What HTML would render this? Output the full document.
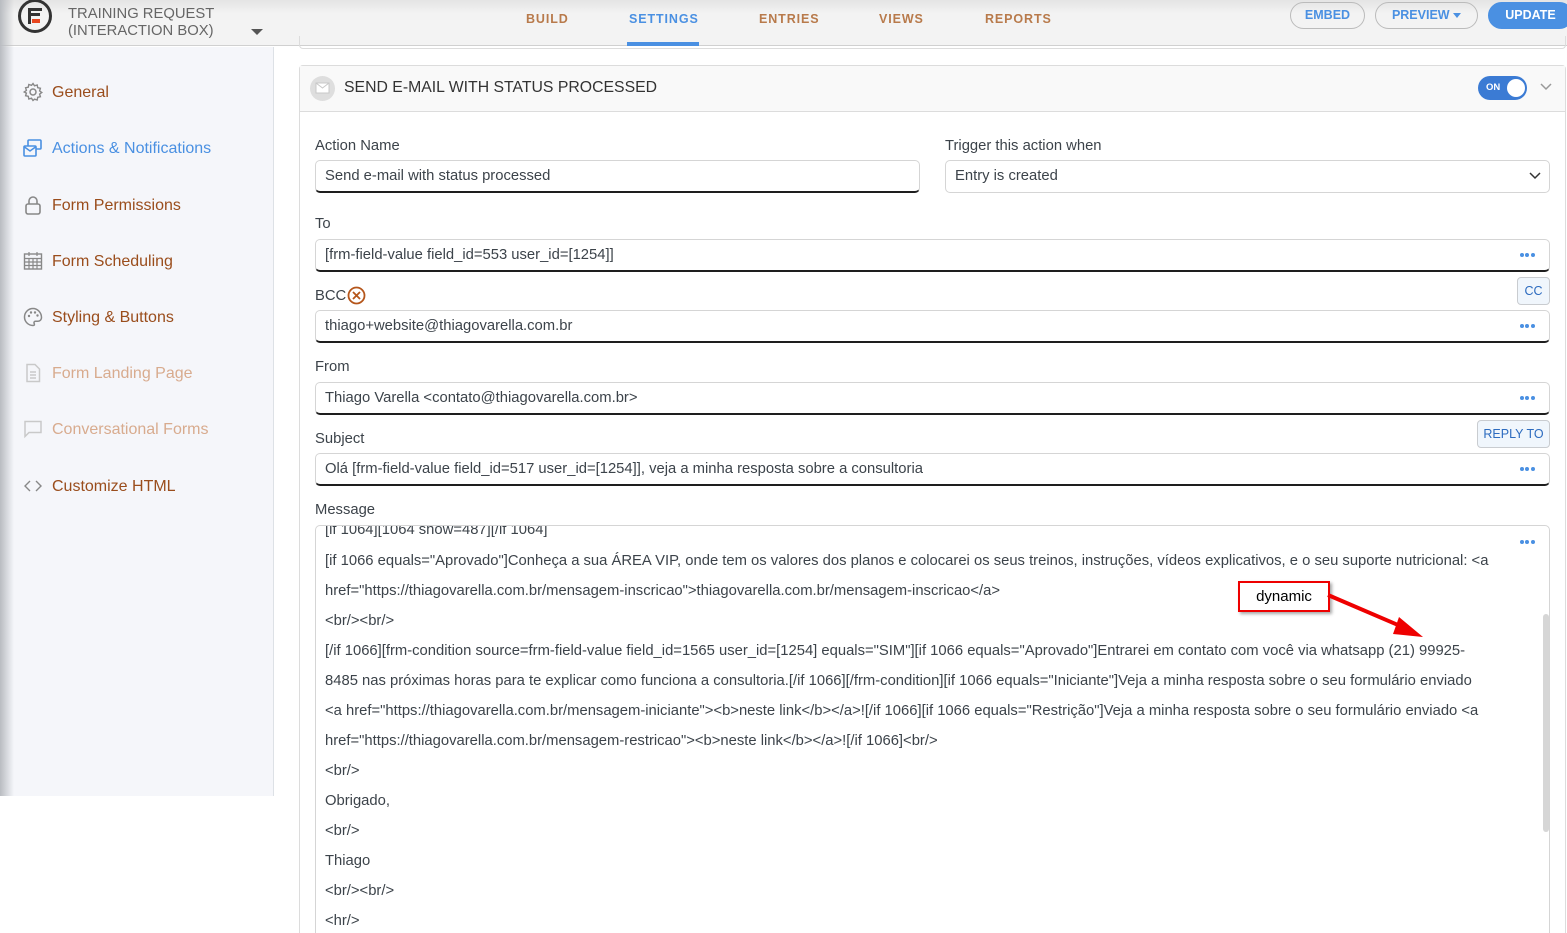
<!DOCTYPE html>
<html><head><meta charset="utf-8"><style>
*{box-sizing:border-box;margin:0;padding:0}
html,body{width:1567px;height:933px;overflow:hidden}
body{background:#fff;font-family:"Liberation Sans",Roboto,sans-serif;color:#3c434a;position:relative}
.hdr{position:absolute;left:0;top:0;width:1567px;height:46px;background:linear-gradient(#e4e4e4,#f3f3f3 30%,#f3f3f3);border-bottom:1px solid #d0d0d0}
.tab{position:absolute;top:12px;font-size:12.5px;font-weight:bold;letter-spacing:0.9px;color:#b87a4b}
.btn{position:absolute;top:2px;height:27px;border-radius:14px;border:1px solid #bbb;color:#4a90e2;font-size:12.5px;font-weight:bold;text-align:center;line-height:25px}
.side{position:absolute;left:0;top:47px;width:274px;height:749px;background:#f5f6fa;border-right:1px solid #dde1e6}
.shadow{position:absolute;left:0;top:0;width:14px;height:796px;background:linear-gradient(90deg,#b9bcc1,rgba(245,246,250,0))}
.nav{position:absolute;left:52px;font-size:16px;color:#9a4d1c}
.ico{position:absolute;left:23px;width:20px;height:20px}
.lab{position:absolute;left:315px;font-size:14.8px;color:#3c434a}
.inp{position:absolute;height:33px;border:1px solid #d5d5d5;border-bottom:2px solid #1e1e1e;border-radius:5px;font-size:14.8px;line-height:30px;padding-left:9px;color:#3c434a;background:#fff}
.dots{position:absolute;right:13px;top:13px;width:16px;height:4px}
.dots i{display:inline-block;width:4px;height:4px;border-radius:2px;background:#4a90e2;margin-right:1.3px;vertical-align:top}
.small{position:absolute;height:28px;border:1px solid #c9ccd0;border-radius:4px;background:#f0f6fc;color:#2c6bbf;font-size:12.5px;line-height:26px;text-align:center}
.msg{position:absolute;left:315px;top:525px;width:1235px;height:420px;border:1px solid #d5d5d5;border-radius:5px;overflow:hidden}
.msg p{position:absolute;left:9px;font-size:14.8px;color:#3c434a;white-space:nowrap}
</style></head><body>
<div class="hdr">
 <svg style="position:absolute;left:17px;top:0" width="37" height="36" viewBox="0 0 37 36"><circle cx="18" cy="16" r="15.5" fill="none" stroke="#333" stroke-width="3"/><rect x="11" y="8" width="14" height="3" fill="#333"/><rect x="11" y="13" width="12" height="3" fill="#333"/><rect x="11" y="8" width="3" height="16" fill="#333"/><rect x="15" y="19" width="8" height="4" fill="#e8461f"/></svg>
 <div style="position:absolute;left:68px;top:6px;font-size:14.8px;line-height:17px;color:#666">TRAINING REQUEST<br>(INTERACTION BOX)</div>
 <div style="position:absolute;left:251px;top:29px;border-left:6px solid transparent;border-right:6px solid transparent;border-top:6px solid #555"></div>
 <div class="tab" style="left:526px">BUILD</div>
 <div class="tab" style="left:629px;color:#4a90e2">SETTINGS</div>
 <div style="position:absolute;left:627px;top:42px;width:72px;height:4px;background:#4a90e2"></div>
 <div class="tab" style="left:759px">ENTRIES</div>
 <div class="tab" style="left:879px">VIEWS</div>
 <div class="tab" style="left:985px">REPORTS</div>
 <div class="btn" style="left:1290px;width:75px">EMBED</div>
 <div class="btn" style="left:1375px;width:103px">PREVIEW <span style="display:inline-block;border-left:4px solid transparent;border-right:4px solid transparent;border-top:5px solid #4a90e2;vertical-align:middle"></span></div>
 <div class="btn" style="left:1488px;width:85px;background:#4a90e2;border-color:#4a90e2;color:#fff">UPDATE</div>
</div>
<div class="side"></div>
<div class="shadow"></div>
<svg class="ico" style="top:82px" viewBox="0 0 20 20"><circle cx="10" cy="10" r="3" fill="none" stroke="#888" stroke-width="1.5"/><path d="M10 1.5l1.5 2.3 2.7-.8.5 2.7 2.7.6-.8 2.6 2.2 1.6-2.2 1.6.8 2.6-2.7.6-.5 2.7-2.7-.8L10 18.5l-1.5-2.3-2.7.8-.5-2.7-2.7-.6.8-2.6L1.2 10l2.2-1.6-.8-2.6 2.7-.6.5-2.7 2.7.8z" fill="none" stroke="#888" stroke-width="1.4"/></svg>
<div class="nav" style="top:84px">General</div>
<svg class="ico" style="top:138px" viewBox="0 0 20 20"><rect x="5" y="2" width="13" height="9" rx="1" fill="none" stroke="#4a90e2" stroke-width="1.6"/><rect x="1" y="8" width="12" height="10" rx="1" fill="#f5f6fa" stroke="#4a90e2" stroke-width="1.6"/><path d="M1.5 9l5.5 4 5.5-4" fill="none" stroke="#4a90e2" stroke-width="1.5"/></svg>
<div class="nav" style="top:140px;color:#4a90e2">Actions &amp; Notifications</div>
<svg class="ico" style="top:195px" viewBox="0 0 20 20"><rect x="3" y="9" width="14" height="10" rx="2" fill="none" stroke="#888" stroke-width="1.6"/><path d="M6 9V6a4 4 0 0 1 8 0v3" fill="none" stroke="#888" stroke-width="1.6"/></svg>
<div class="nav" style="top:197px">Form Permissions</div>
<svg class="ico" style="top:251px" viewBox="0 0 20 20"><rect x="1.5" y="3" width="17" height="15" fill="none" stroke="#888" stroke-width="1.4"/><path d="M1.5 7.5h17M1.5 11h17M1.5 14.5h17M6 7.5v10.5M10 7.5v10.5M14 7.5v10.5M6 1v4M14 1v4" stroke="#888" stroke-width="1.2"/></svg>
<div class="nav" style="top:253px">Form Scheduling</div>
<svg class="ico" style="top:307px" viewBox="0 0 20 20"><path d="M10 1.5a8.5 8.5 0 0 0 0 17c1.5 0 1.8-1 1.2-2-.6-1 0-2.3 1.3-2.3h2.5a3.5 3.5 0 0 0 3.5-3.7C18.4 5.5 14.6 1.5 10 1.5z" fill="none" stroke="#888" stroke-width="1.5"/><circle cx="6" cy="9" r="1.2" fill="#888"/><circle cx="8" cy="5.5" r="1.2" fill="#888"/><circle cx="12" cy="5.5" r="1.2" fill="#888"/><circle cx="14.5" cy="8.5" r="1.2" fill="#888"/></svg>
<div class="nav" style="top:309px">Styling &amp; Buttons</div>
<svg class="ico" style="top:363px" viewBox="0 0 20 20"><path d="M4 1.5h8l4.5 4.5v12.5H4z" fill="none" stroke="#c9c9c9" stroke-width="1.5"/><path d="M7 9h6M7 12h6M7 15h6" stroke="#c9c9c9" stroke-width="1.4"/></svg>
<div class="nav" style="top:365px;color:#d8ab8e">Form Landing Page</div>
<svg class="ico" style="top:419px" viewBox="0 0 20 20"><path d="M2 2.5h16v11H6l-4 4z" fill="none" stroke="#c9c9c9" stroke-width="1.5"/></svg>
<div class="nav" style="top:421px;color:#d8ab8e">Conversational Forms</div>
<svg class="ico" style="top:476px" viewBox="0 0 20 20"><path d="M7 5l-5 5 5 5M13 5l5 5-5 5" fill="none" stroke="#888" stroke-width="1.4"/></svg>
<div class="nav" style="top:478px">Customize HTML</div>

<div style="position:absolute;left:299px;top:36px;width:1267px;height:13px;border:1px solid #dcdcdc;border-top:none;border-radius:0 0 4px 4px"></div>
<div style="position:absolute;left:299px;top:65px;width:1267px;height:880px;border:1px solid #dcdcdc;border-radius:4px"></div>
<div style="position:absolute;left:300px;top:66px;width:1265px;height:46px;background:#f9f9f9;border-bottom:1px solid #dcdcdc"></div>
<div style="position:absolute;left:310px;top:76px;width:25px;height:25px;border-radius:50%;background:#dedede"></div>
<svg style="position:absolute;left:315px;top:82px" width="15" height="12" viewBox="0 0 15 12"><rect x="1" y="1" width="13" height="10" fill="#fff" stroke="#c8c8c8"/><path d="M1 1l6.5 5 6.5-5" fill="none" stroke="#c8c8c8"/></svg>
<div style="position:absolute;left:344px;top:79px;font-size:15.8px;color:#333">SEND E-MAIL WITH STATUS PROCESSED</div>
<div style="position:absolute;left:1478px;top:76px;width:49px;height:24px;border-radius:12px;background:#3b7bd4"></div>
<div style="position:absolute;left:1486px;top:82px;font-size:9.5px;font-weight:bold;color:#fff">ON</div>
<div style="position:absolute;left:1507px;top:79px;width:18px;height:18px;border-radius:50%;background:#fff"></div>
<svg style="position:absolute;left:1540px;top:83px" width="12" height="8"><path d="M1 1l5 5 5-5" fill="none" stroke="#999" stroke-width="1.5"/></svg>

<div class="lab" style="top:138px">Action Name</div>
<div class="inp" style="left:315px;top:160px;width:605px">Send e-mail with status processed</div>
<div class="lab" style="top:138px;left:945px">Trigger this action when</div>
<div class="inp" style="left:945px;top:160px;width:605px;border-bottom:1px solid #d5d5d5">Entry is created
 <svg style="position:absolute;right:8px;top:11px" width="12" height="8"><path d="M1 1l5 5 5-5" fill="none" stroke="#333" stroke-width="1.5"/></svg></div>

<div class="lab" style="top:216px">To</div>
<div class="inp" style="left:315px;top:239px;width:1235px">[frm-field-value field_id=553 user_id=[1254]]<span class="dots"><i></i><i></i><i></i></span></div>
<div class="lab" style="top:288px">BCC</div>
<svg style="position:absolute;left:347px;top:286px" width="19" height="19" viewBox="0 0 19 19"><circle cx="9.5" cy="9.5" r="8" fill="none" stroke="#b5561b" stroke-width="1.8"/><path d="M6 6l7 7M13 6l-7 7" stroke="#b5561b" stroke-width="1.8"/></svg>
<div class="small" style="left:1517px;top:277px;width:33px">CC</div>
<div class="inp" style="left:315px;top:310px;width:1235px">thiago+website@thiagovarella.com.br<span class="dots"><i></i><i></i><i></i></span></div>
<div class="lab" style="top:359px">From</div>
<div class="inp" style="left:315px;top:382px;width:1235px">Thiago Varella &lt;contato@thiagovarella.com.br&gt;<span class="dots"><i></i><i></i><i></i></span></div>
<div class="lab" style="top:431px">Subject</div>
<div class="small" style="left:1477px;top:420px;width:73px">REPLY TO</div>
<div class="inp" style="left:315px;top:453px;width:1235px">Olá [frm-field-value field_id=517 user_id=[1254]], veja a minha resposta sobre a consultoria<span class="dots"><i></i><i></i><i></i></span></div>
<div class="lab" style="top:502px">Message</div>
<div class="msg">
 <p style="top:-4px">[if 1064][1064 show=487][/if 1064]</p>
 <p style="top:27px">[if 1066 equals="Aprovado"]Conheça a sua ÁREA VIP, onde tem os valores dos planos e colocarei os seus treinos, instruções, vídeos explicativos, e o seu suporte nutricional: &lt;a</p>
 <p style="top:57px">href="https://thiagovarella.com.br/mensagem-inscricao"&gt;thiagovarella.com.br/mensagem-inscricao&lt;/a&gt;</p>
 <p style="top:87px">&lt;br/&gt;&lt;br/&gt;</p>
 <p style="top:117px">[/if 1066][frm-condition source=frm-field-value field_id=1565 user_id=[1254] equals="SIM"][if 1066 equals="Aprovado"]Entrarei em contato com você via whatsapp (21) 99925-</p>
 <p style="top:147px">8485 nas próximas horas para te explicar como funciona a consultoria.[/if 1066][/frm-condition][if 1066 equals="Iniciante"]Veja a minha resposta sobre o seu formulário enviado</p>
 <p style="top:177px">&lt;a href="https://thiagovarella.com.br/mensagem-iniciante"&gt;&lt;b&gt;neste link&lt;/b&gt;&lt;/a&gt;![/if 1066][if 1066 equals="Restrição"]Veja a minha resposta sobre o seu formulário enviado &lt;a</p>
 <p style="top:207px">href="https://thiagovarella.com.br/mensagem-restricao"&gt;&lt;b&gt;neste link&lt;/b&gt;&lt;/a&gt;![/if 1066]&lt;br/&gt;</p>
 <p style="top:237px">&lt;br/&gt;</p>
 <p style="top:267px">Obrigado,</p>
 <p style="top:297px">&lt;br/&gt;</p>
 <p style="top:327px">Thiago</p>
 <p style="top:357px">&lt;br/&gt;&lt;br/&gt;</p>
 <p style="top:387px">&lt;hr/&gt;</p>
 <span class="dots" style="top:14px"><i></i><i></i><i></i></span>
 <div style="position:absolute;left:1227px;top:88px;width:6px;height:218px;border-radius:3px;background:#d6d6d6"></div>
</div>
<div style="position:absolute;left:1238px;top:581px;width:92px;height:31px;border:2px solid #e00;background:#fff;box-shadow:2px 2px 3px rgba(0,0,0,.35);font-size:15px;text-align:center;line-height:27px;color:#000">dynamic</div>
<svg style="position:absolute;left:1325px;top:590px" width="100" height="50"><path d="M3 5L80 38" stroke="#e00" stroke-width="4"/><path d="M74 27l24 20-30-3z" fill="#e00"/></svg>
</body></html>
